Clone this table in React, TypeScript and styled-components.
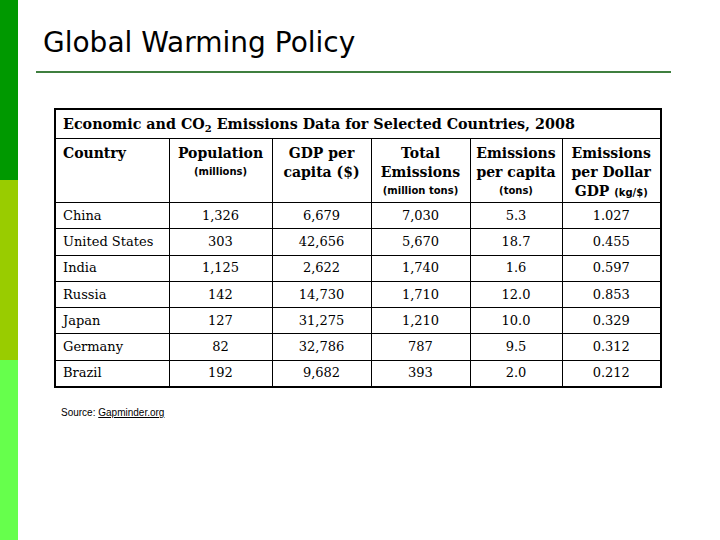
import styled, { createGlobalStyle } from 'styled-components'

const GlobalStyle = createGlobalStyle`
  html, body {
    margin: 0;
    padding: 0;
    background: #ffffff;
  }
`

const Slide = styled.div`
  display: flex;
  width: 720px;
  height: 540px;
  overflow: hidden;
  background: #ffffff;
`

const Stripe = styled.div`
  display: flex;
  flex-direction: column;
  width: 18px;
  flex: 0 0 18px;
`

const StripePart = styled.div<{ $colour: string }>`
  height: 180px;
  background: ${(props) => props.$colour};
`

const Content = styled.div`
  flex: 1;
  display: flex;
  flex-direction: column;
`

const Title = styled.h1`
  margin: 0;
  padding: 27px 0 0 25px;
  height: 71px;
  box-sizing: border-box;
  font-family: 'DejaVu Sans', Verdana, sans-serif;
  font-weight: normal;
  font-size: 28px;
  line-height: 32px;
  color: #000000;
`

const Rule = styled.div`
  margin: 0 0 0 18px;
  width: 635px;
  height: 2px;
  background: #3f7f3f;
`

const DataTable = styled.table`
  margin: 35px 0 0 36px;
  width: 606px;
  border-collapse: collapse;
  border: 2px solid #000000;
  font-family: 'DejaVu Serif', Cambria, serif;
  color: #000000;
  table-layout: fixed;
`

const CaptionCell = styled.th`
  height: 28px;
  padding: 0 0 0 7px;
  text-align: left;
  font-size: 14.3px;
  font-weight: bold;
  border: 1px solid #000000;
  sub {
    font-size: 10px;
    vertical-align: -3px;
    line-height: 0;
  }
`

const HeadCell = styled.th<{ $align?: string }>`
  height: 58px;
  padding: 5px 3px 0 ${(props) => (props.$align === 'left' ? '7px' : '3px')};
  vertical-align: top;
  text-align: ${(props) => props.$align || 'center'};
  font-size: 14px;
  font-weight: bold;
  line-height: 19px;
  border: 1px solid #000000;
`

const Unit = styled.span`
  display: block;
  font-size: 10px;
  line-height: 17px;
  font-family: 'DejaVu Sans', Arial, sans-serif;
`

const InlineUnit = styled.span`
  font-size: 10px;
  font-family: 'DejaVu Sans', Arial, sans-serif;
`

const Cell = styled.td<{ $align?: string }>`
  height: 25.3px;
  padding: 0 4px 0 ${(props) => (props.$align === 'left' ? '7px' : '4px')};
  text-align: ${(props) => props.$align || 'center'};
  font-size: 13px;
  line-height: 16px;
  border: 1px solid #000000;
  white-space: nowrap;
`

const Source = styled.p`
  margin: 19px 0 0 43px;
  font-family: 'Liberation Sans', Arial, sans-serif;
  font-size: 10px;
  color: #000000;
`

const SourceLink = styled.span`
  text-decoration: underline;
`

const widths = [114, 103, 99, 99, 92, 99]

const rows = [
  ['China', '1,326', '6,679', '7,030', '5.3', '1.027'],
  ['United States', '303', '42,656', '5,670', '18.7', '0.455'],
  ['India', '1,125', '2,622', '1,740', '1.6', '0.597'],
  ['Russia', '142', '14,730', '1,710', '12.0', '0.853'],
  ['Japan', '127', '31,275', '1,210', '10.0', '0.329'],
  ['Germany', '82', '32,786', '787', '9.5', '0.312'],
  ['Brazil', '192', '9,682', '393', '2.0', '0.212'],
]

export default function App(): JSX.Element {
  return (
    <>
      <GlobalStyle />
      <Slide>
        <Stripe>
          <StripePart $colour="#009900" />
          <StripePart $colour="#99cc00" />
          <StripePart $colour="#66ff4c" />
        </Stripe>
        <Content>
          <Title>Global Warming Policy</Title>
          <Rule />
          <DataTable>
            <colgroup>
              {widths.map((w, i) => (
                <col key={i} style={{ width: w }} />
              ))}
            </colgroup>
            <thead>
              <tr>
                <CaptionCell colSpan={6}>
                  Economic and CO<sub>2</sub> Emissions Data for Selected Countries, 2008
                </CaptionCell>
              </tr>
              <tr>
                <HeadCell $align="left">Country</HeadCell>
                <HeadCell>
                  Population
                  <Unit>(millions)</Unit>
                </HeadCell>
                <HeadCell>
                  GDP per
                  <br />
                  capita ($)
                </HeadCell>
                <HeadCell>
                  Total
                  <br />
                  Emissions
                  <Unit>(million tons)</Unit>
                </HeadCell>
                <HeadCell>
                  Emissions
                  <br />
                  per capita
                  <Unit>(tons)</Unit>
                </HeadCell>
                <HeadCell>
                  Emissions
                  <br />
                  per Dollar
                  <br />
                  GDP <InlineUnit>(kg/$)</InlineUnit>
                </HeadCell>
              </tr>
            </thead>
            <tbody>
              {rows.map((row) => (
                <tr key={row[0]}>
                  {row.map((value, i) => (
                    <Cell key={i} $align={i === 0 ? 'left' : 'center'}>
                      {value}
                    </Cell>
                  ))}
                </tr>
              ))}
            </tbody>
          </DataTable>
          <Source>
            Source: <SourceLink>Gapminder.org</SourceLink>
          </Source>
        </Content>
      </Slide>
    </>
  )
}
